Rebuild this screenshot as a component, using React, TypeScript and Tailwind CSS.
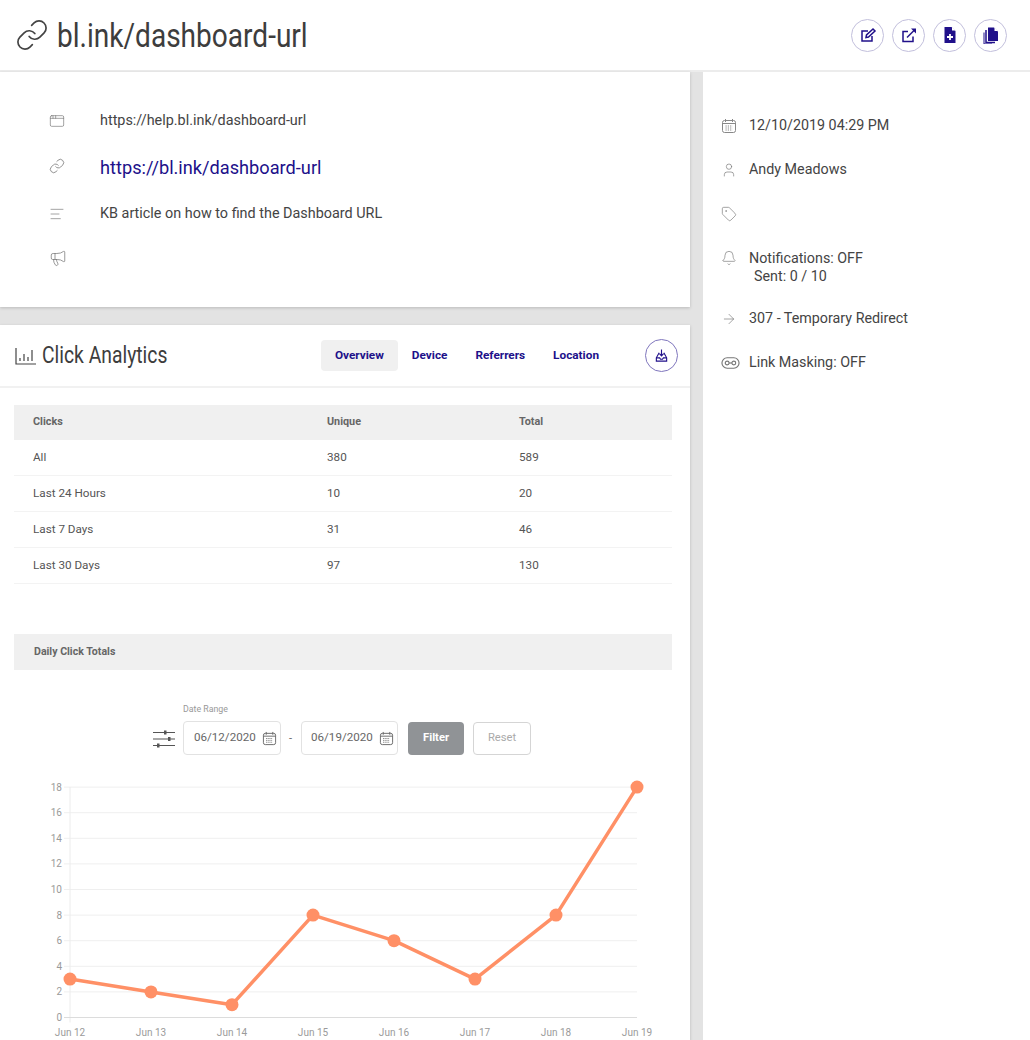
import { Bell, Link, Tag, User, ArrowRight, AlignLeft, Megaphone, AppWindow } from 'lucide-react'

const clickRows = [
  { label: 'All', unique: '380', total: '589' },
  { label: 'Last 24 Hours', unique: '10', total: '20' },
  { label: 'Last 7 Days', unique: '31', total: '46' },
  { label: 'Last 30 Days', unique: '97', total: '130' },
]

const tabs = ['Overview', 'Device', 'Referrers', 'Location']

const chartValues = [3, 2, 1, 8, 6, 3, 8, 18]
const chartDays = ['Jun 12', 'Jun 13', 'Jun 14', 'Jun 15', 'Jun 16', 'Jun 17', 'Jun 18', 'Jun 19']

function CalendarIcon({ className }: { className?: string }) {
  return (
    <svg viewBox="0 0 16 16" className={className} fill="none" stroke="currentColor" strokeWidth="1">
      <rect x="1.5" y="2.5" width="13" height="12" rx="2" />
      <path d="M4.5 1v3M11.5 1v3M1.5 5.5h13" />
      <path d="M4.5 8h7M4.5 10h7M4.5 12h7" strokeDasharray="1.2 1.1" />
    </svg>
  )
}

function MaskIcon({ className }: { className?: string }) {
  return (
    <svg viewBox="0 0 20 14" className={className} fill="none" stroke="currentColor" strokeWidth="1.2">
      <rect x="1" y="1.5" width="18" height="11" rx="5.5" />
      <circle cx="6.5" cy="7" r="2" />
      <circle cx="13.5" cy="7" r="2" />
      <path d="M8.5 7h3" />
    </svg>
  )
}

function EditIcon() {
  return (
    <svg viewBox="0 0 18 18" className="h-[18px] w-[18px]" fill="none" stroke="currentColor" strokeWidth="1.5">
      <path d="M13 10v5H3V5h6" />
      <path d="M7 11.5 7.5 9 14 3l2 2-6.5 6Z" />
    </svg>
  )
}

function OpenIcon() {
  return (
    <svg viewBox="0 0 18 18" className="h-[18px] w-[18px]" fill="none" stroke="currentColor" strokeWidth="1.5">
      <path d="M13 10.5V15.5H3V5.5H8" />
      <path d="M7 11.5 15 3.5" />
      <path d="M11 2.5h5v5Z" fill="currentColor" stroke="none" />
    </svg>
  )
}

function NewFileIcon() {
  return (
    <svg viewBox="0 0 18 18" className="h-[18px] w-[18px]">
      <path d="M3.5 1h7l4 4v12h-11Z" fill="currentColor" />
      <path d="M11 1l3.5 3.5H11Z" fill="white" />
      <path d="M9 8v6M6 11h6" stroke="white" strokeWidth="1.8" />
    </svg>
  )
}

function CopyIcon() {
  return (
    <svg viewBox="0 0 18 18" className="h-[18px] w-[18px]">
      <path d="M6 1.5h6l4 4v9.5H6Z" fill="currentColor" />
      <path d="M12.5 1.5l3.5 3.5h-3.5Z" fill="white" />
      <path d="M4 4v12.5h9" fill="none" stroke="currentColor" strokeWidth="1.5" />
      <path d="M2 6.5v11.5h8" fill="none" stroke="currentColor" strokeWidth="1" />
    </svg>
  )
}

function TrayDownIcon() {
  return (
    <svg viewBox="0 0 16 16" className="h-[15px] w-[15px]" fill="none" stroke="currentColor" strokeWidth="1.2">
      <path d="M5.5 5 2.5 10.5v3.5h11v-3.5L10.5 5" />
      <path d="M2.5 10.5h3.5l1 1.5h2l1-1.5h3.5" />
      <path d="M8 1.5v6.5M5.8 6 8 8.5 10.2 6" />
    </svg>
  )
}

function BarsIcon() {
  return (
    <svg viewBox="0 0 22 20" className="h-[20px] w-[22px] text-[#444]" fill="none" stroke="currentColor" strokeWidth="1.2">
      <path d="M1 2v16h20" />
      <path d="M5 15v-3M9 15V8M13 15v-4M17 15V4" />
    </svg>
  )
}

function SlidersIcon() {
  return (
    <svg viewBox="0 0 22 20" className="h-[20px] w-[22px] text-[#555]" stroke="currentColor" strokeWidth="1.2" fill="currentColor">
      <path d="M0 3.5h22M0 10h22M0 16.5h22" />
      <rect x="11" y="1.5" width="2.5" height="4" stroke="none" />
      <rect x="15" y="8" width="2.5" height="4" stroke="none" />
      <rect x="4" y="14.5" width="2.5" height="4" stroke="none" />
    </svg>
  )
}

function RoundButton({ children }: { children: React.ReactNode }) {
  return (
    <button className="flex h-[33px] w-[33px] items-center justify-center rounded-full border-[1.5px] border-[#c2bfdc] text-[#20108a]">
      {children}
    </button>
  )
}

function LineChart() {
  const xAt = (i: number) => 70 + i * 81
  const yAt = (v: number) => 248.5 - v * 12.8
  const points = chartValues.map((v, i) => `${xAt(i)},${yAt(v)}`).join(' ')
  return (
    <svg viewBox="0 0 690 272" className="h-[272px] w-[690px]">
      {[2, 4, 6, 8, 10, 12, 14, 16, 18].map((v) => (
        <line key={v} x1="64" x2="637" y1={yAt(v)} y2={yAt(v)} stroke="#efefef" strokeWidth="1" />
      ))}
      <line x1="70" x2="70" y1={yAt(18)} y2={yAt(0) + 5} stroke="#ececec" strokeWidth="1" />
      <line x1="64" x2="637" y1={yAt(0)} y2={yAt(0)} stroke="#dcdcdc" strokeWidth="1" />
      {[0, 2, 4, 6, 8, 10, 12, 14, 16, 18].map((v) => (
        <text key={v} x="62" y={yAt(v) + 3.5} textAnchor="end" fontSize="10" fill="#9a9a9a" fontFamily="Roboto, sans-serif">
          {v}
        </text>
      ))}
      {chartDays.map((d, i) => (
        <text key={d} x={xAt(i)} y="267" textAnchor="middle" fontSize="10" fill="#9a9a9a" fontFamily="Roboto, sans-serif">
          {d}
        </text>
      ))}
      <polyline points={points} fill="none" stroke="#ff9066" strokeWidth="3.5" strokeLinejoin="round" />
      {chartValues.map((v, i) => (
        <circle key={i} cx={xAt(i)} cy={yAt(v)} r="6.5" fill="#ff9066" />
      ))}
    </svg>
  )
}

export default function App() {
  return (
    <div className="h-[1040px] w-[1030px] overflow-hidden bg-[#e3e3e3] font-['Roboto',sans-serif] text-[#444]">
      {/* Header */}
      <header className="flex h-[72px] items-center justify-between border-b-2 border-[#ececec] bg-white pl-[15px] pr-[23px]">
        <div className="flex items-center gap-[8px]">
          <Link className="h-[34px] w-[34px] text-[#444]" strokeWidth={1.2} />
          <h1 className="origin-left scale-x-[0.85] whitespace-nowrap text-[33px] leading-none text-[#3d3d3d]">bl.ink/dashboard-url</h1>
        </div>
        <div className="flex items-center gap-[8px]">
          <RoundButton><EditIcon /></RoundButton>
          <RoundButton><OpenIcon /></RoundButton>
          <RoundButton><NewFileIcon /></RoundButton>
          <RoundButton><CopyIcon /></RoundButton>
        </div>
      </header>

      <div className="flex h-[968px]">
        {/* Left column */}
        <div className="flex w-[690px] flex-col gap-[18px]">
          <section className="flex h-[235px] shrink-0 flex-col bg-white pl-[49px] pt-[37px] text-[14.4px] shadow-[0_1px_3px_rgba(0,0,0,0.18)]">
            <div className="flex h-[24px] items-center gap-[35px]">
              <AppWindow className="h-[16px] w-[16px] text-[#777]" strokeWidth={1} />
              <span>https://help.bl.ink/dashboard-url</span>
            </div>
            <div className="mt-[23px] flex h-[24px] items-center gap-[35px]">
              <Link className="h-[16px] w-[16px] -translate-y-[2px] text-[#777]" strokeWidth={1.2} />
              <span className="text-[18.2px] text-[#20108a]">https://bl.ink/dashboard-url</span>
            </div>
            <div className="mt-[22px] flex h-[24px] items-center gap-[35px]">
              <AlignLeft className="h-[16px] w-[16px] text-[#777]" strokeWidth={1} />
              <span>KB article on how to find the Dashboard URL</span>
            </div>
            <div className="mt-[20px] flex h-[24px] items-center">
              <Megaphone className="h-[18px] w-[18px] text-[#777]" strokeWidth={1} />
            </div>
          </section>

          <section className="flex-1 bg-white shadow-[0_1px_3px_rgba(0,0,0,0.18)]">
            <div className="flex h-[63px] items-center border-b-2 border-[#f1f1f1] pl-[15px] pr-[12px]">
              <BarsIcon />
              <h2 className="ml-[5px] origin-left scale-x-[0.84] whitespace-nowrap text-[23px] leading-none text-[#3d3d3d]">Click Analytics</h2>
              <nav className="ml-auto flex items-center text-[11.8px] font-bold text-[#20108a]">
                {tabs.map((t, i) => (
                  <span key={t} className={i === 0 ? 'rounded bg-[#f0f0f0] px-[14px] py-[7px]' : 'px-[14px] py-[7px]'}>{t}</span>
                ))}
              </nav>
              <button className="ml-[32px] flex h-[33px] w-[33px] items-center justify-center rounded-full border border-[#7f76bd] text-[#20108a]">
                <TrayDownIcon />
              </button>
            </div>

            <div className="ml-[14px] mr-[18px] mt-[17px] text-[11.7px]">
              <div className="flex h-[35px] items-center bg-[#f0f0f0] text-[10.8px] font-bold text-[#666]">
                <span className="w-[313px] pl-[19px]">Clicks</span>
                <span className="w-[192px]">Unique</span>
                <span>Total</span>
              </div>
              {clickRows.map((r) => (
                <div key={r.label} className="flex h-[36px] items-center border-b border-[#f3f3f3] text-[#555]">
                  <span className="w-[313px] pl-[19px]">{r.label}</span>
                  <span className="w-[192px]">{r.unique}</span>
                  <span>{r.total}</span>
                </div>
              ))}
              <div className="mt-[50px] flex h-[36px] items-center bg-[#f0f0f0] pl-[20px] text-[10.6px] font-bold text-[#666]">Daily Click Totals</div>
            </div>

            {/* Date filter */}
            <div className="ml-[153px] mt-[33px] flex items-end">
              <div className="mb-[6px] mr-[8px]">
                <SlidersIcon />
              </div>
              <div>
                <div className="mb-[5px] text-[8.8px] text-[#999]">Date Range</div>
                <div className="flex h-[34px] w-[98px] items-center justify-between rounded-sm border border-[#e2e2e2] pl-[10px] pr-[3px] text-[11.6px] text-[#666]">
                  06/12/2020 <CalendarIcon className="h-[15px] w-[15px] text-[#666]" />
                </div>
              </div>
              <span className="ml-[8px] mr-[9px] mb-[8px] text-[11px] text-[#666]">-</span>
              <div className="flex h-[34px] w-[97px] items-center justify-between rounded-sm border border-[#e2e2e2] pl-[9px] pr-[3px] text-[11.6px] text-[#666]">
                06/19/2020 <CalendarIcon className="h-[15px] w-[15px] text-[#666]" />
              </div>
              <button className="ml-[10px] h-[33px] w-[56px] rounded-sm bg-[#909396] text-[11.2px] font-bold text-white">Filter</button>
              <button className="ml-[9px] h-[33px] w-[58px] rounded-sm border border-[#d5d5d5] text-[11.2px] text-[#aaa]">Reset</button>
            </div>

            <div className="mt-[14px]">
              <LineChart />
            </div>
          </section>
        </div>

        {/* Right column */}
        <aside className="ml-[13px] flex-1 bg-white pl-[18px] pt-[43px] text-[14.3px]">
          <div className="flex h-[22px] items-center gap-[12px]">
            <CalendarIcon className="h-[16px] w-[16px] text-[#888]" />
            <span>12/10/2019 04:29 PM</span>
          </div>
          <div className="mt-[22px] flex h-[22px] items-center gap-[12px]">
            <User className="h-[16px] w-[16px] text-[#777]" strokeWidth={1} />
            <span>Andy Meadows</span>
          </div>
          <div className="mt-[22px] flex h-[22px] items-center">
            <Tag className="h-[16px] w-[16px] text-[#777]" strokeWidth={1} />
          </div>
          <div className="mt-[24px] flex gap-[12px] leading-[18px]">
            <Bell className="mt-[1px] h-[16px] w-[16px] text-[#777]" strokeWidth={1} />
            <div>
              <div>Notifications: OFF</div>
              <div className="pl-[5px]">Sent: 0 / 10</div>
            </div>
          </div>
          <div className="mt-[23px] flex h-[22px] items-center gap-[12px]">
            <ArrowRight className="h-[16px] w-[16px] text-[#777]" strokeWidth={1} />
            <span>307 - Temporary Redirect</span>
          </div>
          <div className="mt-[22px] flex h-[22px] items-center gap-[9px]">
            <MaskIcon className="h-[14px] w-[19px] text-[#777]" />
            <span>Link Masking: OFF</span>
          </div>
        </aside>
      </div>
    </div>
  )
}
